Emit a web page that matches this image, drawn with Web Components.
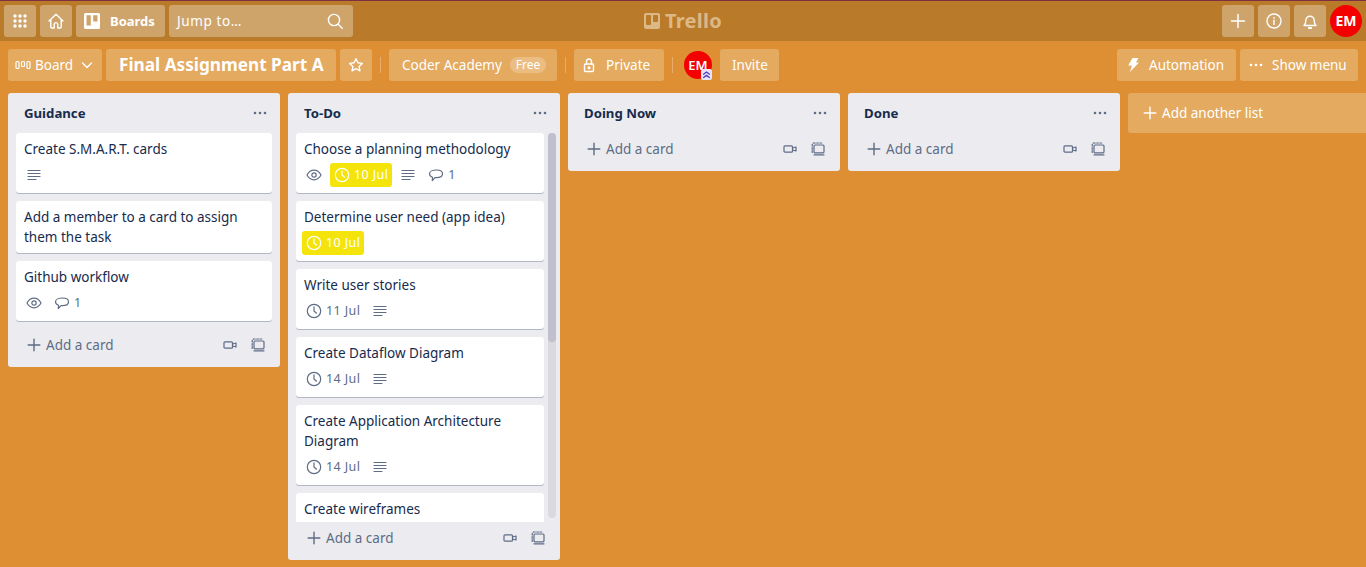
<!DOCTYPE html>
<html lang="en">
<head>
<meta charset="utf-8">
<title>Final Assignment Part A | Trello</title>
<style>
  html, body { margin: 0; height: 100%; overflow: hidden; }
  body { font: 13.5px/20px "Noto Sans", "Open Sans", sans-serif; color: #172b4d; background: #de8f33; }
</style>
</head>
<body>
<trello-app>
  <top-nav slot="nav"></top-nav>
  <board-bar slot="bar"></board-bar>
  <board-lists slot="lists">
    <board-list name="Guidance">
      <board-card title="Create S.M.A.R.T. cards"><card-badge icon="lines"></card-badge></board-card>
      <board-card title="Add a member to a card to assign them the task"></board-card>
      <board-card title="Github workflow"><card-badge icon="eye"></card-badge><card-badge icon="comment">1</card-badge></board-card>
    </board-list>
    <board-list name="To-Do" scrolled>
      <board-card title="Choose a planning methodology"><card-badge icon="eye"></card-badge><card-badge icon="clock" due>10 Jul</card-badge><card-badge icon="lines"></card-badge><card-badge icon="comment">1</card-badge></board-card>
      <board-card title="Determine user need (app idea)"><card-badge icon="clock" due>10 Jul</card-badge></board-card>
      <board-card title="Write user stories"><card-badge icon="clock">11 Jul</card-badge><card-badge icon="lines"></card-badge></board-card>
      <board-card title="Create Dataflow Diagram"><card-badge icon="clock">14 Jul</card-badge><card-badge icon="lines"></card-badge></board-card>
      <board-card title="Create Application Architecture Diagram"><card-badge icon="clock">14 Jul</card-badge><card-badge icon="lines"></card-badge></board-card>
      <board-card title="Create wireframes"></board-card>
    </board-list>
    <board-list name="Doing Now"></board-list>
    <board-list name="Done"></board-list>
    <add-list></add-list>
  </board-lists>
</trello-app>

<script>
/* 1 ▸ icons, all on a 16 box */
const ICONS = {
  apps: '<g fill="currentColor" stroke="none"><circle cx="3" cy="3" r="1.700"/><circle cx="8" cy="3" r="1.700"/><circle cx="13" cy="3" r="1.700"/><circle cx="3" cy="8" r="1.700"/><circle cx="8" cy="8" r="1.700"/><circle cx="13" cy="8" r="1.700"/><circle cx="3" cy="13" r="1.700"/><circle cx="8" cy="13" r="1.700"/><circle cx="13" cy="13" r="1.700"/></g>',
  home: '<path d="M1 8 8 1.200 15 8M2.800 6.600V14a1 1 0 0 0 1 1h2.400v-3.600a1.800 1.800 0 0 1 3.600 0V15h2.400a1 1 0 0 0 1-1V6.600"/>',
  boards: '<path fill="currentColor" stroke="none" fill-rule="evenodd" d="M1.500 0h13A1.500 1.500 0 0 1 16 1.500v13a1.500 1.500 0 0 1-1.500 1.500h-13A1.500 1.500 0 0 1 0 14.500v-13A1.500 1.500 0 0 1 1.500 0ZM2.500 2.200v10.300h4.300V2.200ZM9.200 2.200v6.300h4.300V2.200Z"/>',
  search: '<circle cx="7" cy="7" r="5.600"/><path d="m11.200 11.200 4 4"/>',
  bars: '<g fill="none"><rect x="1" y="4.500" width="3" height="7" rx="1"/><rect x="6.500" y="4.500" width="3" height="5" rx="1"/><rect x="12" y="4.500" width="3" height="7" rx="1"/></g>',
  chevron: '<path d="m3.500 6 4.500 4.500L12.500 6"/>',
  star: '<path d="m8 1.800 1.900 4 4.400.6-3.200 3 .8 4.400L8 11.700l-3.900 2.100.8-4.400-3.200-3 4.400-.6Z"/>',
  lock: '<rect x="3.500" y="7" width="9" height="7.500" rx="1"/><path d="M5.500 7V4.500a2.500 2.500 0 0 1 5 0V7"/><circle cx="8" cy="10.700" r=".8" fill="currentColor"/>',
  bolt: '<path fill="currentColor" stroke="none" d="M7.500 1h6l-2.500 4.500h3L5 15l1.800-6.500H3.200Z"/>',
  dots: '<g fill="currentColor" stroke="none"><circle cx="3" cy="8" r="1.300"/><circle cx="8" cy="8" r="1.300"/><circle cx="13" cy="8" r="1.300"/></g>',
  plus: '<path d="M8 1.500v13M1.500 8h13"/>',
  plusSm: '<path d="M8 2.200v11.600M2.200 8h11.600"/>',
  info: '<circle cx="8" cy="8" r="7"/><path d="M8 7.200v4.300"/><circle cx="8" cy="4.800" r=".9" fill="currentColor" stroke="none"/>',
  bell: '<path d="M2 12.500c1.500-1.200 1.800-2.400 1.800-5a4.200 4.200 0 0 1 8.400 0c0 2.600.3 3.800 1.800 5Z"/><path d="M6.800 15h2.400" stroke-width="1.800"/>',
  lines: '<path d="M2 3.500h12M2 6.500h12M2 9.500h12M2 12.500h8"/>',
  eye: '<path d="M1 8c1.700-3.200 4-4.800 7-4.800s5.300 1.600 7 4.800c-1.700 3.200-4 4.800-7 4.800S2.700 11.200 1 8Z"/><circle cx="8" cy="8" r="2.200"/>',
  comment: '<path d="M8.500 3c3.600 0 6 1.400 6 3.800s-2.400 3.900-6 3.900H7L4.300 13.500l.2-3.200C2.700 9.600 1.500 8.400 1.500 6.800 1.500 4.400 4.900 3 8.500 3Z"/>',
  clock: '<circle cx="8" cy="8" r="6.700"/><path d="M8 3.800V8l2.500 2.200"/>',
  camera: '<rect x="2" y="4.800" width="8.500" height="6.400" rx="1"/><path d="M10.500 7 14 6v4l-3.500-1"/>',
  template: '<path d="M2.200 11.500V4a2 2 0 0 1 2-2h7.500" stroke-dasharray="1.800 1.400"/><rect x="4" y="4" width="10" height="7.800" rx="1"/><path d="M4 13.800h10"/>'
};

class TIcon extends HTMLElement {
  connectedCallback() {
    if (this.shadowRoot) return;
    const root = this.attachShadow({ mode: 'open' });
    const size = this.getAttribute('size') || 16;
    const sw = this.getAttribute('stroke') || 1.4;
    root.innerHTML = `
      <style>:host { display: inline-flex; flex: none; } svg { display: block; }</style>
      <svg width="${size}" height="${size}" viewBox="0 0 16 16" fill="none" stroke="currentColor"
           stroke-width="${sw}" stroke-linecap="round" stroke-linejoin="round">${ICONS[this.getAttribute('name')] || ''}</svg>`;
  }
}

/* 2 ▸ translucent button used in both bars */
class TButton extends HTMLElement {
  constructor() {
    super();
    this.attachShadow({ mode: 'open' }).innerHTML = `
      <style>
        :host {
          display: inline-flex; align-items: center; flex: none;
          height: 32px; box-sizing: border-box; padding: var(--pad, 0 12px);
          gap: var(--gap, 8px);
          border-radius: 3px; color: #fff;
          background: var(--btn, #e4aa60);
          white-space: nowrap;
        }
      </style>
      <slot></slot>`;
  }
}

/* 3 ▸ top navigation */
class TopNav extends HTMLElement {
  constructor() {
    super();
    this.attachShadow({ mode: 'open' }).innerHTML = `
      <style>
        :host {
          display: grid; grid-template-columns: 1fr auto 1fr; align-items: center;
          height: 41px; box-sizing: border-box; padding: 0 4px;
          background: #b97a2a; border-top: 1px solid #7f2f42;
          --btn: #cea46b;
        }
        .side { display: flex; gap: 4px; align-items: center; }
        .right { justify-content: flex-end; }
        .sq { --pad: 0 8px; }
        .boards { --pad: 0 9px 0 8px; --gap: 10px; font-weight: 700; font-size: 13px; width: 89px; }
        .jump { width: 184px; --pad: 0 10px 0 8px; justify-content: space-between; letter-spacing: .6px; }
        .logo { display: flex; align-items: center; gap: 5px; color: #dbb886;
                font-size: 20px; font-weight: 700; letter-spacing: .3px; }
        .logo i { width: 16px; height: 16px; background: currentColor; border-radius: 2px; display: flex; gap: 2px; padding: 2px; box-sizing: border-box; }
        .logo b { width: 5px; background: #b97a2a; height: 10px; border-radius: 1px; }
        .logo b + b { height: 7px; }
        .me { width: 32px; height: 32px; border-radius: 50%; background: #f40000; color: #fff;
              display: flex; align-items: center; justify-content: center; font-weight: 700; font-size: 14px; }
      </style>
      <div class="side">
        <t-button class="sq"><t-icon name="apps"></t-icon></t-button>
        <t-button class="sq"><t-icon name="home"></t-icon></t-button>
        <t-button class="boards"><t-icon name="boards"></t-icon>Boards</t-button>
        <t-button class="jump">Jump to…<t-icon name="search"></t-icon></t-button>
      </div>
      <div class="logo"><i><b></b><b></b></i>Trello</div>
      <div class="side right">
        <t-button class="sq"><t-icon name="plus" stroke="1.500"></t-icon></t-button>
        <t-button class="sq"><t-icon name="info"></t-icon></t-button>
        <t-button class="sq"><t-icon name="bell"></t-icon></t-button>
        <div class="me">EM</div>
      </div>`;
  }
}

/* 4 ▸ board header bar */
class BoardBar extends HTMLElement {
  constructor() {
    super();
    this.attachShadow({ mode: 'open' }).innerHTML = `
      <style>
        :host {
          display: flex; align-items: center; justify-content: space-between;
          padding: 8px 8px 12px; height: 32px;
        }
        .side { display: flex; align-items: center; gap: 4px; }
        .sep { width: 1px; height: 16px; background: #e9ad68; margin: 0 4px; }
        .title { font-size: 17.2px; font-weight: 700; --pad: 0 12px 0 13px; width: 230px; }
        .view { --pad: 0 7px; --gap: 4px; width: 94px; }
        .view t-icon:last-child { margin-left: 2px; }
        .sq { --pad: 0 8px; }
        .org { --pad: 0 12px 0 13px; width: 168px; justify-content: space-between; }
        .free { font-size: 12px; line-height: 16px; height: 16px; padding: 0 6px; border-radius: 8px; background: #ebbd82; }
        .priv { --pad: 0 12px 0 7px; --gap: 9px; width: 90px; }
        .inv { width: 59px; --pad: 0 12px; }
        .mem { position: relative; width: 28px; height: 28px; border-radius: 50%; background: #f40000; color: #fff;
               display: flex; align-items: center; justify-content: center; font-size: 13px; font-weight: 600; margin: 0 4px 0 3px; }
        .mem svg { position: absolute; right: 0; bottom: -1px; }
        .auto { --pad: 0 12px 0 8px; --gap: 8px; width: 119px; }
        .menu { --pad: 0 12px 0 8px; --gap: 8px; width: 118px; }
      </style>
      <div class="side">
        <t-button class="view"><t-icon name="bars" stroke="1.200"></t-icon>Board<t-icon name="chevron"></t-icon></t-button>
        <t-button class="title">Final Assignment Part A</t-button>
        <t-button class="sq"><t-icon name="star"></t-icon></t-button>
        <span class="sep"></span>
        <t-button class="org">Coder Academy<span class="free">Free</span></t-button>
        <span class="sep"></span>
        <t-button class="priv"><t-icon name="lock"></t-icon>Private</t-button>
        <span class="sep"></span>
        <div class="mem">EM<svg width="11" height="11" viewBox="0 0 10 10"><rect width="10" height="10" rx="2" fill="#e9e4f8"/><path d="M2 5l3-2.200L8 5M2 8l3-2.200L8 8" fill="none" stroke="#4b3bb8" stroke-width="1.200"/></svg></div>
        <t-button class="inv">Invite</t-button>
      </div>
      <div class="side">
        <t-button class="auto"><t-icon name="bolt"></t-icon>Automation</t-button>
        <t-button class="menu"><t-icon name="dots"></t-icon>Show menu</t-button>
      </div>`;
  }
}

/* 5 ▸ lists */
class BoardLists extends HTMLElement {
  constructor() {
    super();
    this.attachShadow({ mode: 'open' }).innerHTML = `
      <style>
        :host {
          display: flex; align-items: flex-start; gap: 8px;
          flex: 1; min-height: 0; padding: 0 8px 7px; overflow: hidden;
        }
      </style>
      <slot></slot>`;
  }
}

class BoardList extends HTMLElement {
  constructor() {
    super();
    this.attachShadow({ mode: 'open' }).innerHTML = `
      <style>
        :host {
          display: flex; flex-direction: column; flex: none;
          width: 272px; max-height: 100%; box-sizing: border-box;
          background: #ebebf0; border-radius: 3px;
        }
        header {
          display: flex; align-items: center; justify-content: space-between;
          height: 40px; flex: none; padding: 0 12px 0 16px;
          font-weight: 700; font-size: 13.2px; color: #172b4d;
        }
        header t-icon { color: #5e6c84; }
        .body { display: flex; flex: 1; min-height: 0; padding: 0 8px; gap: 4px; }
        :host([scrolled]) .body { padding-right: 4px; }
        .cards { flex: 1; min-width: 0; overflow: hidden; display: flex; flex-direction: column; gap: 8px; }
        ::slotted(*) { flex: none; }
        .bar { display: none; width: 8px; flex: none; margin-bottom: 4px; border-radius: 4px; background: #d9d9df; }
        .bar i { display: block; height: 209px; border-radius: 4px; background: #bfbfcd; }
        :host([scrolled]) .bar { display: block; }
        footer {
          display: flex; align-items: center; flex: none; height: 32px;
          padding: 0 14px 0 8px; margin-bottom: 6px; gap: 4px;
          color: #5e6c84;
        }
        .add { flex: 1; display: flex; align-items: center; gap: 4px; padding-left: 10px; }
        footer > t-icon + t-icon { margin-left: 8px; }
      </style>
      <header><span class="name"></span><t-icon name="dots" stroke="1"></t-icon></header>
      <div class="body">
        <div class="cards"><slot></slot></div>
        <div class="bar"><i></i></div>
      </div>
      <footer>
        <span class="add"><t-icon name="plusSm"></t-icon>Add a card</span>
        <t-icon name="camera" stroke="1.200"></t-icon>
        <t-icon name="template" stroke="1.200"></t-icon>
      </footer>`;
  }
  connectedCallback() {
    this.shadowRoot.querySelector('.name').textContent = this.getAttribute('name');
    if (this.children.length && !this.hasAttribute('scrolled')) {
      this.shadowRoot.querySelector('.cards').style.paddingBottom = '8px';
    }
  }
}

/* 6 ▸ card + badge */
class BoardCard extends HTMLElement {
  constructor() {
    super();
    this.attachShadow({ mode: 'open' }).innerHTML = `
      <style>
        :host {
          display: block; background: #fff; border-radius: 3px;
          box-shadow: 0 1px 0 rgba(9,30,66,.25);
          padding: 6px 8px; color: #172b4d;
        }
        .row { display: flex; margin: 4px 0 0 -2px; }
        .row.none { display: none; }
      </style>
      <div class="t"></div>
      <div class="row"><slot></slot></div>`;
  }
  connectedCallback() {
    this.shadowRoot.querySelector('.t').textContent = this.getAttribute('title');
    this.removeAttribute('title');
    if (!this.children.length) this.shadowRoot.querySelector('.row').classList.add('none');
  }
}

class CardBadge extends HTMLElement {
  connectedCallback() {
    if (this.shadowRoot) return;
    this.attachShadow({ mode: 'open' }).innerHTML = `
      <style>
        :host {
          display: inline-flex; align-items: center; gap: 4px;
          height: 24px; padding: 0 4px; margin-right: 4px;
          border-radius: 3px; color: #5e6c84; font-size: 12.5px; letter-spacing: .4px;
        }
        :host([due]) { background: #f4e40c; color: #fff; }
      </style>
      <t-icon name="${this.getAttribute('icon')}" stroke="1.200"></t-icon><slot></slot>`;
  }
}

class AddList extends HTMLElement {
  constructor() {
    super();
    this.attachShadow({ mode: 'open' }).innerHTML = `
      <style>
        :host {
          display: flex; align-items: center; gap: 4px; flex: none;
          width: 272px; height: 40px; box-sizing: border-box; padding: 0 14px;
          background: #e4aa60; color: #fff; border-radius: 3px;
        }
      </style>
      <t-icon name="plusSm"></t-icon>Add another list`;
  }
}

/* 7 ▸ page shell */
class TrelloApp extends HTMLElement {
  constructor() {
    super();
    this.attachShadow({ mode: 'open' }).innerHTML = `
      <style>
        :host { display: flex; flex-direction: column; height: 100vh; overflow: hidden; }
        ::slotted(board-lists) { flex: 1; min-height: 0; }
      </style>
      <slot name="nav"></slot><slot name="bar"></slot><slot name="lists"></slot>`;
  }
}

/* 8 ▸ register */
customElements.define('t-icon', TIcon);
customElements.define('t-button', TButton);
customElements.define('top-nav', TopNav);
customElements.define('board-bar', BoardBar);
customElements.define('board-lists', BoardLists);
customElements.define('board-list', BoardList);
customElements.define('board-card', BoardCard);
customElements.define('card-badge', CardBadge);
customElements.define('add-list', AddList);
customElements.define('trello-app', TrelloApp);
</script>
</body>
</html>
